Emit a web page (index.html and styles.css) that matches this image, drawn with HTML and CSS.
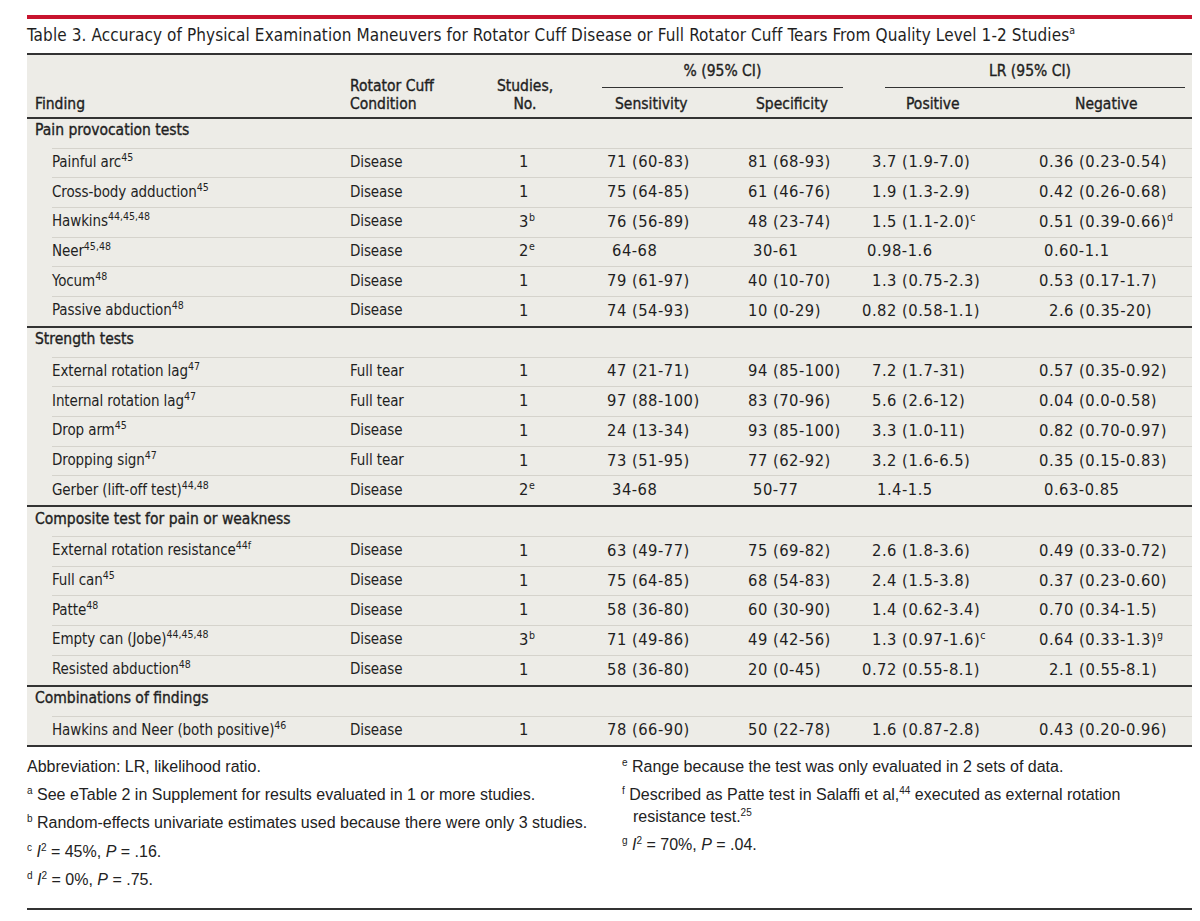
FILE: index.html
```html
<!DOCTYPE html>
<html lang="en">
<head>
<meta charset="utf-8">
<title>Table 3</title>
<link rel="stylesheet" href="styles.css">
</head>
<body>
<div class="page">
  <div class="red-rule"></div>
  <h1 class="title">Table 3. Accuracy of Physical Examination Maneuvers for Rotator Cuff Disease or Full Rotator Cuff Tears From Quality Level 1-2 Studies<sup>a</sup></h1>

  <div class="table">
    <div class="thead">
      <div class="h h-find">Finding</div>
      <div class="h h-cond">Rotator Cuff<br>Condition</div>
      <div class="h h-stud">Studies,<br>No.</div>
      <div class="h grp grp-pct"><span class="grp-label">% (95% CI)</span></div>
      <div class="h grp grp-lr"><span class="grp-label">LR (95% CI)</span></div>
      <div class="h sub s4">Sensitivity</div>
      <div class="h sub s5">Specificity</div>
      <div class="h sub s6">Positive</div>
      <div class="h sub s7">Negative</div>
    </div>

    <div class="section first">Pain provocation tests</div>
    <div class="row"><div class="c1">Painful arc<sup>45</sup></div><div class="c2">Disease</div><div class="c3">1</div><div class="c4">71 (60-83)</div><div class="c5">81 (68-93)</div><div class="c6 x10">3.7 (1.9-7.0)</div><div class="c7">0.36 (0.23-0.54)</div></div>
    <div class="row"><div class="c1">Cross-body adduction<sup>45</sup></div><div class="c2">Disease</div><div class="c3">1</div><div class="c4">75 (64-85)</div><div class="c5">61 (46-76)</div><div class="c6 x10">1.9 (1.3-2.9)</div><div class="c7">0.42 (0.26-0.68)</div></div>
    <div class="row"><div class="c1">Hawkins<sup>44,45,48</sup></div><div class="c2">Disease</div><div class="c3">3<sup>b</sup></div><div class="c4">76 (56-89)</div><div class="c5">48 (23-74)</div><div class="c6 x10">1.5 (1.1-2.0)<sup>c</sup></div><div class="c7">0.51 (0.39-0.66)<sup>d</sup></div></div>
    <div class="row"><div class="c1">Neer<sup>45,48</sup></div><div class="c2">Disease</div><div class="c3">2<sup>e</sup></div><div class="c4 x5">64-68</div><div class="c5 x5">30-61</div><div class="c6 x5">0.98-1.6</div><div class="c7 x5">0.60-1.1</div></div>
    <div class="row"><div class="c1">Yocum<sup>48</sup></div><div class="c2">Disease</div><div class="c3">1</div><div class="c4">79 (61-97)</div><div class="c5">40 (10-70)</div><div class="c6 x10">1.3 (0.75-2.3)</div><div class="c7">0.53 (0.17-1.7)</div></div>
    <div class="row"><div class="c1">Passive abduction<sup>48</sup></div><div class="c2">Disease</div><div class="c3">1</div><div class="c4">74 (54-93)</div><div class="c5">10 (0-29)</div><div class="c6">0.82 (0.58-1.1)</div><div class="c7 x10">2.6 (0.35-20)</div></div>

    <div class="section">Strength tests</div>
    <div class="row"><div class="c1">External rotation lag<sup>47</sup></div><div class="c2">Full tear</div><div class="c3">1</div><div class="c4">47 (21-71)</div><div class="c5">94 (85-100)</div><div class="c6 x10">7.2 (1.7-31)</div><div class="c7">0.57 (0.35-0.92)</div></div>
    <div class="row"><div class="c1">Internal rotation lag<sup>47</sup></div><div class="c2">Full tear</div><div class="c3">1</div><div class="c4">97 (88-100)</div><div class="c5">83 (70-96)</div><div class="c6 x10">5.6 (2.6-12)</div><div class="c7">0.04 (0.0-0.58)</div></div>
    <div class="row"><div class="c1">Drop arm<sup>45</sup></div><div class="c2">Disease</div><div class="c3">1</div><div class="c4">24 (13-34)</div><div class="c5">93 (85-100)</div><div class="c6 x10">3.3 (1.0-11)</div><div class="c7">0.82 (0.70-0.97)</div></div>
    <div class="row"><div class="c1">Dropping sign<sup>47</sup></div><div class="c2">Full tear</div><div class="c3">1</div><div class="c4">73 (51-95)</div><div class="c5">77 (62-92)</div><div class="c6 x10">3.2 (1.6-6.5)</div><div class="c7">0.35 (0.15-0.83)</div></div>
    <div class="row"><div class="c1">Gerber (lift-off test)<sup>44,48</sup></div><div class="c2">Disease</div><div class="c3">2<sup>e</sup></div><div class="c4 x5">34-68</div><div class="c5 x5">50-77</div><div class="c6 x15">1.4-1.5</div><div class="c7 x5">0.63-0.85</div></div>

    <div class="section">Composite test for pain or weakness</div>
    <div class="row"><div class="c1">External rotation resistance<sup>44f</sup></div><div class="c2">Disease</div><div class="c3">1</div><div class="c4">63 (49-77)</div><div class="c5">75 (69-82)</div><div class="c6 x10">2.6 (1.8-3.6)</div><div class="c7">0.49 (0.33-0.72)</div></div>
    <div class="row"><div class="c1">Full can<sup>45</sup></div><div class="c2">Disease</div><div class="c3">1</div><div class="c4">75 (64-85)</div><div class="c5">68 (54-83)</div><div class="c6 x10">2.4 (1.5-3.8)</div><div class="c7">0.37 (0.23-0.60)</div></div>
    <div class="row"><div class="c1">Patte<sup>48</sup></div><div class="c2">Disease</div><div class="c3">1</div><div class="c4">58 (36-80)</div><div class="c5">60 (30-90)</div><div class="c6 x10">1.4 (0.62-3.4)</div><div class="c7">0.70 (0.34-1.5)</div></div>
    <div class="row"><div class="c1">Empty can (Jobe)<sup>44,45,48</sup></div><div class="c2">Disease</div><div class="c3">3<sup>b</sup></div><div class="c4">71 (49-86)</div><div class="c5">49 (42-56)</div><div class="c6 x10">1.3 (0.97-1.6)<sup>c</sup></div><div class="c7">0.64 (0.33-1.3)<sup>g</sup></div></div>
    <div class="row"><div class="c1">Resisted abduction<sup>48</sup></div><div class="c2">Disease</div><div class="c3">1</div><div class="c4">58 (36-80)</div><div class="c5">20 (0-45)</div><div class="c6">0.72 (0.55-8.1)</div><div class="c7 x10">2.1 (0.55-8.1)</div></div>

    <div class="section">Combinations of findings</div>
    <div class="row"><div class="c1">Hawkins and Neer (both positive)<sup>46</sup></div><div class="c2">Disease</div><div class="c3">1</div><div class="c4">78 (66-90)</div><div class="c5">50 (22-78)</div><div class="c6 x10">1.6 (0.87-2.8)</div><div class="c7">0.43 (0.20-0.96)</div></div>
  </div>

  <div class="notes">
    <div class="notes-col">
      <p>Abbreviation: LR, likelihood ratio.</p>
      <p><sup>a</sup> See eTable 2 in Supplement for results evaluated in 1 or more studies.</p>
      <p><sup>b</sup> Random-effects univariate estimates used because there were only 3 studies.</p>
      <p><sup>c</sup> <i>I</i><sup>2</sup> = 45%, <i>P</i> = .16.</p>
      <p><sup>d</sup> <i>I</i><sup>2</sup> = 0%, <i>P</i> = .75.</p>
    </div>
    <div class="notes-col">
      <p><sup>e</sup> Range because the test was only evaluated in 2 sets of data.</p>
      <p class="hang"><sup>f</sup> Described as Patte test in Salaffi et al,<sup>44</sup> executed as external rotation<br>resistance test.<sup>25</sup></p>
      <p><sup>g</sup> <i>I</i><sup>2</sup> = 70%, <i>P</i> = .04.</p>
    </div>
  </div>
</div>
</body>
</html>
```

FILE: styles.css
```css
* { box-sizing: border-box; }

html, body {
  margin: 0;
  padding: 0;
  background: #ffffff;
}

.page {
  margin-left: 27px;
  width: 1165px;
  padding-top: 15px;
  color: #1f1f1f;
  font-family: "DejaVu Sans Condensed", "DejaVu Sans", "Liberation Sans", Arial, sans-serif;
  font-stretch: semi-condensed;
}

sup {
  font-size: 10.5px;
  line-height: 0;
  vertical-align: 6px;
  letter-spacing: 0;
}

.red-rule {
  height: 3.5px;
  background: #c8142e;
}

.title {
  margin: 5px 0 0 0;
  padding: 0 0 7px 0;
  font-size: 17px;
  font-weight: normal;
  line-height: 22px;
  letter-spacing: 0.1px;
  white-space: nowrap;
  border-bottom: 2px solid #333333;
}

.title sup {
  font-size: 10.5px;
  vertical-align: 7px;
}

.table {
  background: #edece7;
  font-size: 16.4px;
  letter-spacing: 0.5px;
  border-bottom: 2px solid #333333;
}

.thead {
  display: grid;
  grid-template-columns: 313px 140px 110px 145px 120px 170px 167px;
  grid-template-rows: auto auto;
  padding-top: 7px;
  padding-bottom: 3.5px;
  border-bottom: 2px solid #333333;
  line-height: 17.5px;
  font-size: 15.5px;
  letter-spacing: 0;
}

.h {
  -webkit-text-stroke: 0.35px #1f1f1f;
}

.h-find { grid-column: 1; grid-row: 1 / 3; align-self: end; padding-left: 8px; }
.h-cond { grid-column: 2; grid-row: 1 / 3; align-self: end; padding-left: 10px; }
.h-stud { grid-column: 3; grid-row: 1 / 3; align-self: end; text-align: center; padding-right: 20px; }

.grp {
  grid-row: 1;
  display: flex;
}

.grp-label {
  flex: 1;
  text-align: center;
  line-height: 18px;
  padding-bottom: 7px;
  border-bottom: 1px solid #333333;
}

.grp-pct { grid-column: 4 / 6; padding: 0 12px; }
.grp-lr { grid-column: 6 / 8; padding: 0 7px 0 30px; }
.grp-lr .grp-label { padding-right: 10px; }

.sub {
  grid-row: 2;
  padding-top: 7.5px;
  line-height: 18px;
}
.s4 { grid-column: 4; padding-left: 25px; }
.s5 { grid-column: 5; padding-left: 21px; }
.s6 { grid-column: 6; padding-left: 51px; }
.s7 { grid-column: 7; padding-left: 50px; }

.section {
  height: 31px;
  padding-left: 8px;
  padding-bottom: 6px;
  display: flex;
  align-items: center;
  border-top: 2px solid #333333;
  font-size: 15.5px;
  letter-spacing: 0;
  -webkit-text-stroke: 0.35px #1f1f1f;
}

.section.first {
  height: 29px;
  border-top: none;
}

.row {
  display: grid;
  grid-template-columns: 288px 140px 110px 145px 120px 170px 167px;
  margin-left: 25px;
  height: 29.7px;
  border-top: 1px solid #d5d3cc;
  align-items: center;
  padding-bottom: 2px;
  white-space: nowrap;
}

.c1, .c2 {
  font-size: 15px;
  letter-spacing: -0.1px;
}

.c2 { padding-left: 10px; }
.c3 { padding-left: 39px; }
.c4 { padding-left: 17px; }
.c5 { padding-left: 13px; }
.c6 { padding-left: 7px; }
.c7 { padding-left: 14px; }

.x5 { text-indent: 5px; }
.x10 { text-indent: 10px; }
.x15 { text-indent: 15px; }

.notes {
  display: grid;
  grid-template-columns: 595px 1fr;
  padding-top: 8.5px;
  padding-bottom: 10px;
  border-bottom: 2px solid #333333;
  font-family: "Liberation Sans", Arial, sans-serif;
  font-stretch: normal;
  font-size: 16px;
  letter-spacing: 0;
  line-height: 22px;
  color: #222222;
}

.notes p {
  margin: 0 0 6.4px 0;
}

.notes sup {
  font-size: 10px;
  vertical-align: 6px;
}

.hang {
  padding-left: 11px;
  text-indent: -11px;
}
```
